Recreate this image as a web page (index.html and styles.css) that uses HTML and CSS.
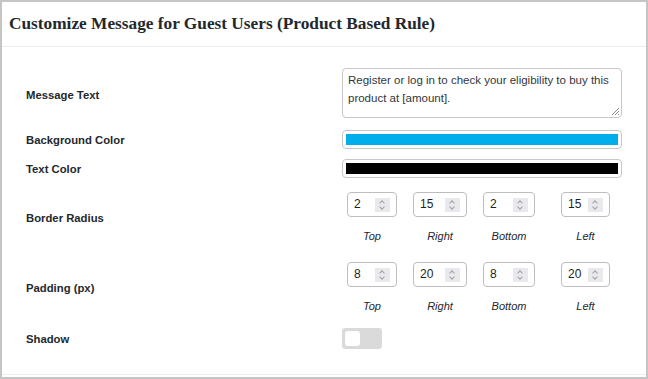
FILE: index.html
```html
<!DOCTYPE html>
<html lang="en">
<head>
    <meta charset="UTF-8">
    <meta name="viewport" content="width=device-width, initial-scale=1.0">
    <title>Guest Message Settings</title>
    <link rel="stylesheet" href="styles.css">
</head>
<body>
    <div id="panel">
        <!-- title bar -->
        <div id="panel-header">
            <h2>Customize Message for Guest Users (Product Based Rule)</h2>
        </div>

        <!-- settings -->
        <div id="panel-body">
            <div class="row row-message">
                <label class="row-label">Message Text</label>
                <div class="message-box">Register or log in to check your eligibility to buy this product at [amount].
                    <svg class="grip" width="10" height="10" viewBox="0 0 10 10">
                        <path d="M9 2L2 9M9 5L5 9M9 8L8 9" stroke="#8a8a8a" stroke-width="1"/>
                    </svg>
                </div>
            </div>

            <div class="row row-bg">
                <label class="row-label">Background Color</label>
                <div class="color-box"><span class="swatch swatch-blue"></span></div>
            </div>

            <div class="row row-text">
                <label class="row-label">Text Color</label>
                <div class="color-box"><span class="swatch swatch-black"></span></div>
            </div>

            <div class="row row-radius">
                <label class="row-label">Border Radius</label>
                <div class="sides">
                    <div class="side side-top"><div class="num">2<span class="spin"></span></div><em>Top</em></div>
                    <div class="side side-right"><div class="num">15<span class="spin"></span></div><em>Right</em></div>
                    <div class="side side-bottom"><div class="num">2<span class="spin"></span></div><em>Bottom</em></div>
                    <div class="side side-left"><div class="num">15<span class="spin"></span></div><em>Left</em></div>
                </div>
            </div>

            <div class="row row-padding">
                <label class="row-label">Padding (px)</label>
                <div class="sides">
                    <div class="side side-top"><div class="num">8<span class="spin"></span></div><em>Top</em></div>
                    <div class="side side-right"><div class="num">20<span class="spin"></span></div><em>Right</em></div>
                    <div class="side side-bottom"><div class="num">8<span class="spin"></span></div><em>Bottom</em></div>
                    <div class="side side-left"><div class="num">20<span class="spin"></span></div><em>Left</em></div>
                </div>
            </div>

            <div class="row row-shadow">
                <label class="row-label">Shadow</label>
                <div class="toggle"><span class="knob"></span></div>
            </div>
        </div>
    </div>
</body>
</html>
```

FILE: styles.css
```css
body {
    margin: 0;
    padding: 0;
    font-family: "Liberation Sans", Arial, sans-serif;
    background: #ffffff;
}

#panel {
    width: 648px;
    height: 379px;
    box-sizing: border-box;
    border: 2px solid #c5c5c6;
    background: #ffffff;
    display: flex;
    flex-direction: column;
}

#panel-header {
    height: 44px;
    display: flex;
    align-items: center;
    padding-left: 7px;
    border-bottom: 1px solid #ededed;
}

#panel-header h2 {
    margin: 0;
    font-family: "Liberation Serif", "Times New Roman", serif;
    font-size: 17.3px;
    font-weight: bold;
    color: #23282d;
}

#panel-body {
    flex: 1;
    padding: 21px 0 0 24px;
    border-bottom: 1px solid #eeeeee;
    margin-bottom: 2px;
}

.row {
    display: grid;
    grid-template-columns: 316px 1fr;
    align-items: center;
}

.row-label {
    font-size: 11.3px;
    font-weight: bold;
    color: #23282d;
}

.row-message .row-label { padding-top: 4px; }

.row-message { margin-bottom: 12px; }
.row-bg { margin-bottom: 10px; }
.row-text { margin-bottom: 14px; }
.row-radius { margin-bottom: 19px; }
.row-padding { margin-bottom: 15px; }

.message-box {
    position: relative;
    width: 280px;
    height: 50px;
    box-sizing: border-box;
    border: 1px solid #c7c7c7;
    border-radius: 4px;
    padding: 2px 5px;
    font-size: 11.5px;
    line-height: 18px;
    color: #32373c;
}

.grip {
    position: absolute;
    right: 1px;
    bottom: 1px;
}

.color-box {
    width: 280px;
    height: 19px;
    box-sizing: border-box;
    border: 1px solid #c7c7c7;
    border-radius: 4px;
    padding: 3px;
    display: flex;
}

.swatch {
    flex: 1;
}

.swatch-blue { background: #00aeeb; }
.swatch-black { background: #000000; }

.sides {
    display: flex;
    padding-left: 5px;
}

.side {
    display: flex;
    flex-direction: column;
    align-items: center;
}

.side-top { width: 50px; margin-right: 16px; }
.side-right { width: 54px; margin-right: 16px; }
.side-bottom { width: 52px; margin-right: 26px; }
.side-left { width: 49px; }

.num {
    position: relative;
    width: 100%;
    height: 25px;
    box-sizing: border-box;
    border: 1px solid #bdbdbd;
    border-radius: 4px;
    font-size: 12px;
    line-height: 23px;
    padding-left: 6px;
    color: #1e1e1e;
}

.spin {
    position: absolute;
    right: 6px;
    top: 5px;
    width: 15px;
    height: 14px;
    background: #e9e9ed;
}

.spin::before,
.spin::after {
    content: "";
    position: absolute;
    left: 5px;
    width: 3px;
    height: 3px;
    border-left: 1px solid #a0a0a5;
    border-top: 1px solid #a0a0a5;
}

.spin::before {
    top: 3px;
    transform: rotate(45deg);
}

.spin::after {
    top: 7px;
    transform: rotate(225deg);
}

.side em {
    margin-top: 12px;
    font-size: 11px;
    line-height: 14px;
    color: #23282d;
}

.toggle {
    width: 40px;
    height: 21px;
    background: #dadada;
    border-radius: 3px;
    display: flex;
    align-items: center;
    padding-left: 3px;
    box-sizing: border-box;
}

.knob {
    width: 15px;
    height: 15px;
    background: #ffffff;
    border-radius: 3px;
}
```
